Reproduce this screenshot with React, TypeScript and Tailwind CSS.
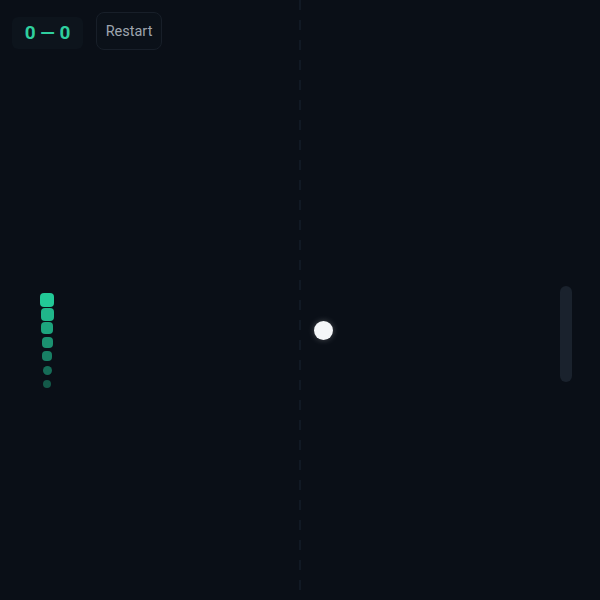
import React from "react";

const trail = [
  { size: 14, opacity: 1 },
  { size: 13, opacity: 0.9 },
  { size: 12, opacity: 0.8 },
  { size: 11, opacity: 0.7 },
  { size: 10, opacity: 0.6 },
  { size: 9, opacity: 0.5 },
  { size: 8, opacity: 0.4 },
];

export default function App() {
  return (
    <div
      className="relative w-[600px] h-[600px] overflow-hidden bg-[#0a0f17]"
      style={{ fontFamily: "Roboto, 'Noto Sans', sans-serif" }}
    >
      {/* center net */}
      <div className="absolute left-[299px] top-0 h-full w-[2px] bg-[repeating-linear-gradient(to_bottom,#111924_0px,#111924_10px,transparent_10px,transparent_20px)]" />

      {/* header: score + restart */}
      <div className="relative flex items-center gap-[13px] pl-3 pt-3">
        <div className="mt-[4px] flex h-[32px] w-[71px] items-center justify-center rounded-md bg-[#0d141c] text-[19px] font-bold text-[#2fcf9e]">
          0 — 0
        </div>
        <button className="flex h-[38px] w-[66px] items-center justify-center rounded-lg border border-[#181f29] bg-[#0b1119] pt-px text-[14.5px] text-[#9ea5ae]">
          Restart
        </button>
      </div>

      {/* left paddle trail */}
      <div className="absolute left-[40px] top-[293px] flex w-[14px] flex-col items-center">
        {trail.map((t, i) => (
          <div key={i} className="flex h-[14px] w-[14px] items-center justify-center">
            <div
              className="bg-[#22c997]"
              style={{ width: t.size, height: t.size, opacity: t.opacity, borderRadius: i >= 5 ? t.size / 2 : 4 }}
            />
          </div>
        ))}
      </div>

      {/* ball */}
      <div className="absolute left-[314px] top-[321px] h-[19px] w-[19px] rounded-full bg-[#f4f6f8] shadow-[0_0_6px_rgba(255,255,255,0.25)]" />

      {/* right paddle */}
      <div className="absolute left-[560px] top-[286px] h-[96px] w-[12px] rounded-full bg-[#1a222d]" />
    </div>
  );
}
